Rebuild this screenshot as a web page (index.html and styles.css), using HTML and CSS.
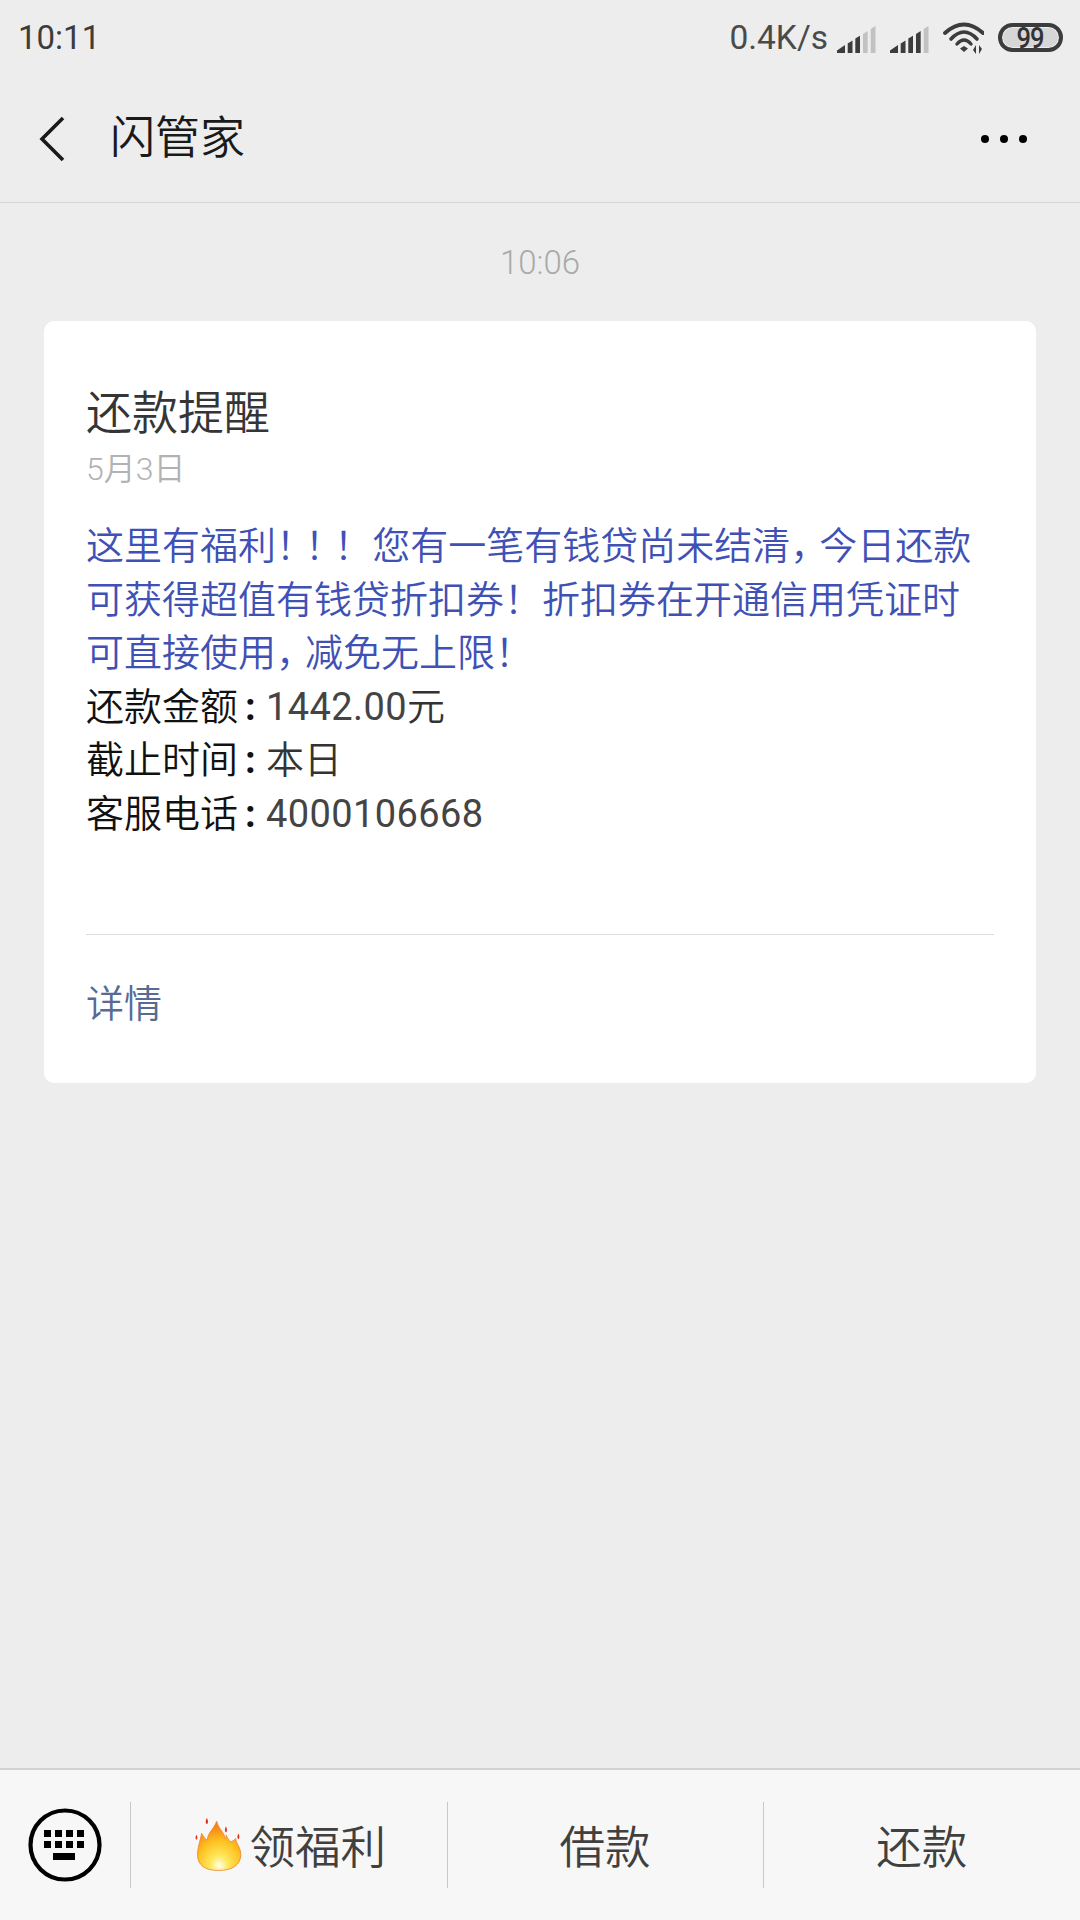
FILE: index.html
```html
<!DOCTYPE html>
<html lang="zh-CN">
<head>
    <meta charset="UTF-8">
    <meta name="viewport" content="width=device-width, initial-scale=1.0">
    <title>闪管家</title>
    <link rel="stylesheet" href="styles.css">
</head>
<body>

    <div class="statusbar">
        <span class="clock">10:11</span>
        <div class="status-right">
            <span class="speed">0.4K/s</span>
            <svg class="signal" width="39" height="27" viewBox="0 0 39 27">
                <path d="M0 27v-2.500L8 19v8z" fill="#3c3c3c"/>
                <path d="M10.700 27V17.400L15.500 14.400V27z" fill="#3c3c3c"/>
                <path d="M18.300 27V12.600L23 9.700V27z" fill="#3c3c3c"/>
                <path d="M26 27V7.900L30.700 5V27z" fill="#c2c2c2"/>
                <path d="M33.700 27V3.100L38.500 0.100V27z" fill="#c2c2c2"/>
            </svg>
            <svg class="signal signal-two" width="39" height="27" viewBox="0 0 39 27">
                <path d="M0 27v-2.500L8 19v8z" fill="#3c3c3c"/>
                <path d="M10.700 27V17.400L15.500 14.400V27z" fill="#3c3c3c"/>
                <path d="M18.300 27V12.600L23 9.700V27z" fill="#3c3c3c"/>
                <path d="M26 27V7.900L30.700 5V27z" fill="#3c3c3c"/>
                <path d="M33.700 27V3.100L38.500 0.100V27z" fill="#c2c2c2"/>
            </svg>
            <svg class="wifi" width="42" height="34" viewBox="0 0 42 34">
                <g fill="none" stroke="#3c3c3c" stroke-linecap="round">
                    <path d="M3 12Q22 -5 41 12" stroke-width="3.800"/>
                    <path d="M9 18Q22 4 35 18" stroke-width="3.600"/>
                    <path d="M15 23Q22 15 29 23" stroke-width="3.400"/>
                </g>
                <path d="M18 27.500L22 25L26 27.500L22 31z" fill="#3c3c3c"/>
                <path d="M34 24v9l-3-4zM37 33v-9l3 4z" fill="#3c3c3c"/>
            </svg>
            <div class="battery"><span class="battery-level">99</span></div>
        </div>
    </div>

    <div class="navbar">
        <svg class="back" width="30" height="48" viewBox="0 0 30 48">
            <path d="M25 3L4 24L25 45" fill="none" stroke="#1a1a1a" stroke-width="3.600"/>
        </svg>
        <span class="nav-title">闪管家</span>
        <div class="more"><i></i><i></i><i></i></div>
    </div>

    <div class="chat">
        <div class="time">10:06</div>
        <div class="card">
            <div class="card-body">
                <div class="card-title">还款提醒</div>
                <div class="card-date">5月3日</div>
                <div class="card-text">
                    <p class="blue">这里有福利<span class="mark">！！！</span> 您有一笔有钱贷尚未结清<span class="mark">，</span>今日还款</p>
                    <p class="blue">可获得超值有钱贷折扣券！折扣券在开通信用凭证时</p>
                    <p class="blue">可直接使用<span class="mark">，</span>减免无上限<span class="mark">！</span></p>
                    <p><span class="label">还款金额<b class="colon">:</b></span><span class="num">1442.00</span>元</p>
                    <p><span class="label">截止时间<b class="colon">:</b></span>本日</p>
                    <p><span class="label">客服电话<b class="colon">:</b></span><span class="num">4000106668</span></p>
                </div>
            </div>
            <div class="card-link">详情</div>
        </div>
    </div>

    <div class="tabbar">
        <div class="keyboard">
            <svg width="74" height="74" viewBox="0 0 74 74">
                <circle cx="37" cy="37" r="34.500" fill="none" stroke="#000" stroke-width="4.200"/>
                <g fill="#000">
                    <rect x="16" y="22" width="7" height="7"/><rect x="27" y="22" width="7" height="7"/><rect x="38" y="22" width="7" height="7"/><rect x="49" y="22" width="7" height="7"/>
                    <rect x="16" y="33" width="7" height="7"/><rect x="27" y="33" width="7" height="7"/><rect x="38" y="33" width="7" height="7"/><rect x="49" y="33" width="7" height="7"/>
                    <rect x="25" y="45" width="22" height="7"/>
                </g>
            </svg>
        </div>
        <div class="tab">
            <svg class="flame" width="48" height="54" viewBox="0 0 46 52">
                <defs>
                    <radialGradient id="flame-fill" cx="0.5" cy="0.9" r="0.8">
                        <stop offset="0" stop-color="#fffdf0"/>
                        <stop offset="0.25" stop-color="#ffe85c"/>
                        <stop offset="0.65" stop-color="#fdbf1e"/>
                        <stop offset="1" stop-color="#f5811a"/>
                    </radialGradient>
                </defs>
                <path d="M20.700 4C22 11 28 14 29 21C30 19.500 30 18.500 29.700 17.300C31 20 33 23 34 24C36 23.500 38 22 39 20.700C39 25 44 29 44 36C44 46 36 51.500 22.500 51.500C9 51.500 2.300 46 2.300 36C2.300 29 5.500 21 6.300 15.700C8 19 10 21.500 11.700 22.300C12 15 18.500 11 20.700 4z" fill="url(#flame-fill)" stroke="#f0862a" stroke-width="0.800"/>
                <path d="M11.300 1C12.800 3.500 12.800 6 11.300 7C9.800 6 9.800 3.500 11.300 1zM29.700 9C31 11.500 31 14 29.700 15C28.400 14 28.400 11.500 29.700 9zM41.700 16C43 18.500 43 20.500 41.700 21.500C40.400 20.500 40.400 18.500 41.700 16zM1.300 17C2.500 19 2.500 21 1.300 22C0.100 21 0.100 19 1.300 17z" fill="#d8331e"/>
            </svg>
            <span>领福利</span>
        </div>
        <div class="tab">借款</div>
        <div class="tab">还款</div>
    </div>

</body>
</html>
```

FILE: styles.css
```css
body {
    margin: 0;
    width: 1080px;
    height: 1920px;
    background-color: #ededed;
    font-family: Roboto, "Noto Sans CJK SC", sans-serif;
    font-weight: 350;
    color: #333;
    display: flex;
    flex-direction: column;
    overflow: hidden;
}
p {
    margin: 0;
}
.statusbar {
    height: 76px;
    box-sizing: border-box;
    padding: 0 17px 2px 18px;
    display: flex;
    align-items: center;
    justify-content: space-between;
    color: #3c3c3c;
}
.clock {
    font-size: 33px;
    font-weight: 400;
}
.status-right {
    display: flex;
    align-items: center;
}
.speed {
    font-size: 33.500px;
    font-weight: 400;
    color: #4a4a4a;
    margin-right: 9px;
}
.signal {
    margin-top: 4px;
}
.signal-two {
    margin-left: 14px;
}
.wifi {
    margin-left: 13px;
    margin-top: 2px;
}
.battery {
    margin-left: 14px;
    width: 65px;
    height: 29px;
    box-sizing: border-box;
    border: 4px solid #3c3c3c;
    border-radius: 15px;
    background-color: #d6d6d6;
    box-shadow: inset 0 0 0 1px #ededed;
    display: flex;
    align-items: center;
    justify-content: center;
}
.battery-level {
    display: block;
    font-size: 30px;
    font-weight: 500;
    line-height: 21px;
    letter-spacing: -1px;
    color: #333;
    transform: scaleX(0.85);
}
.navbar {
    height: 126px;
    display: flex;
    align-items: center;
    padding: 0 53px 0 38px;
    border-bottom: 1px solid #d6d6d6;
}
.back {
    margin-right: 42px;
}
.nav-title {
    font-size: 45px;
    color: #1a1a1a;
    padding-bottom: 10px;
}
.more {
    margin-left: auto;
    display: flex;
    gap: 11px;
}
.more i {
    width: 8px;
    height: 8px;
    border-radius: 50%;
    background-color: #000;
}
.chat {
    flex: 1;
    padding: 0 44px;
}
.time {
    text-align: center;
    font-size: 33px;
    color: #aaa;
    line-height: 36px;
    padding: 42px 0 40px;
}
.card {
    background-color: #fff;
    border-radius: 10px;
    height: 762px;
    box-sizing: border-box;
    padding: 0 42px;
    display: flex;
    flex-direction: column;
}
.card-body {
    height: 613px;
    border-bottom: 1px solid #dcdcdc;
}
.card-title {
    font-size: 46px;
    line-height: 60px;
    padding-top: 62px;
    color: #353535;
}
.card-date {
    font-size: 32px;
    line-height: 40px;
    margin-top: 6px;
    color: #b2b2b2;
}
.card-text {
    margin-top: 31px;
    font-size: 38px;
    line-height: 53.500px;
    white-space: nowrap;
}
.blue {
    color: #3f51b5;
}
.mark {
    letter-spacing: -9px;
}
.num {
    font-weight: 400;
    color: #444;
    letter-spacing: 0.400px;
}
.label {
    color: #111;
}
.colon {
    display: inline-block;
    width: 28px;
    padding-left: 7px;
    box-sizing: border-box;
    font-weight: 700;
}
.card-link {
    font-size: 38px;
    line-height: 139px;
    color: #576b95;
}
.tabbar {
    height: 150px;
    border-top: 2px solid #d2d2d2;
    background-color: #f7f7f7;
    display: flex;
    align-items: center;
    font-size: 45.500px;
    color: #404040;
}
.keyboard {
    width: 130px;
    display: flex;
    justify-content: center;
}
.tab {
    flex: 1;
    height: 86px;
    box-sizing: border-box;
    padding: 0 1px 2px 0;
    border-left: 1px solid #c8c8c8;
    display: flex;
    align-items: center;
    justify-content: center;
    gap: 7px;
}
.flame {
    margin-left: 4px;
}
```
